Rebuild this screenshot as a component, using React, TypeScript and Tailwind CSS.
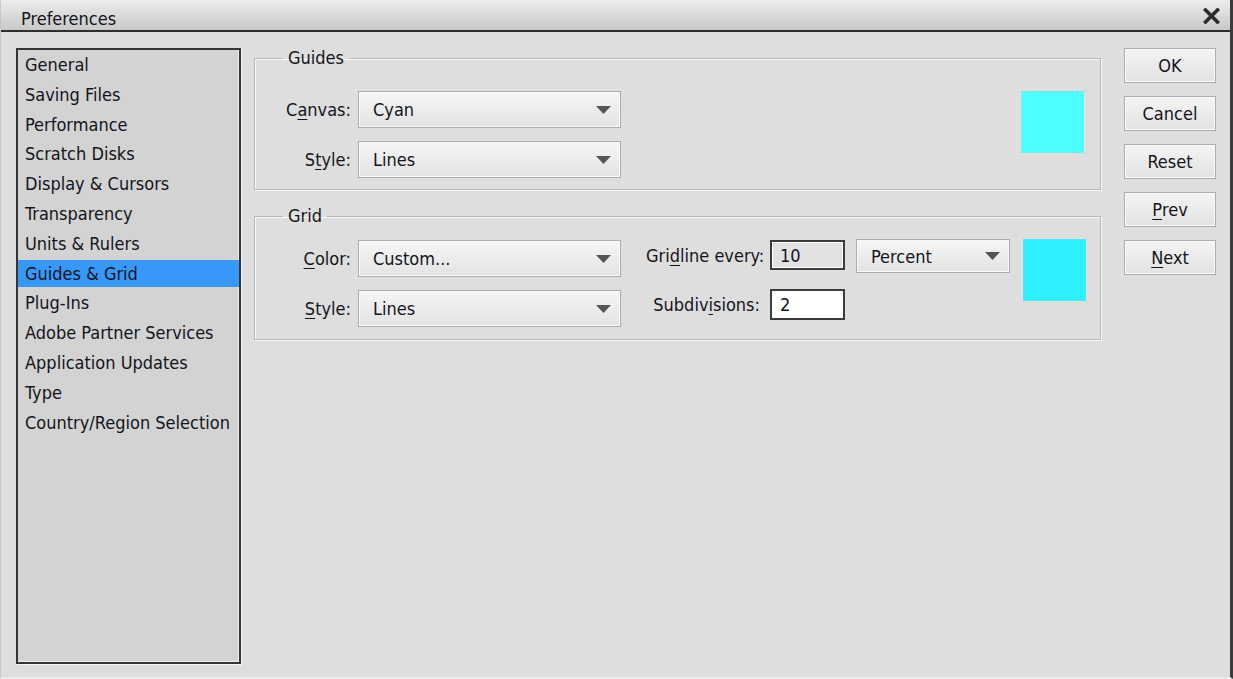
import { ReactNode } from "react";

const FONT = "font-['DejaVu_Sans_Condensed','DejaVu_Sans',sans-serif]";

const categories = [
  "General",
  "Saving Files",
  "Performance",
  "Scratch Disks",
  "Display & Cursors",
  "Transparency",
  "Units & Rulers",
  "Guides & Grid",
  "Plug-Ins",
  "Adobe Partner Services",
  "Application Updates",
  "Type",
  "Country/Region Selection",
];

// label with one underlined mnemonic letter
function Mn({ text, at }: { text: string; at: number }) {
  return (
    <>
      {text.slice(0, at)}
      <span className="underline underline-offset-[3px]">{text[at]}</span>
      {text.slice(at + 1)}
    </>
  );
}

function Dropdown({ value, w, h }: { value: string; w: string; h: string }) {
  return (
    <div
      className={`${w} ${h} flex items-center justify-between border border-[#acacac] bg-gradient-to-b from-[#f6f6f6] to-[#e3e3e3] pl-[14px] pr-[9px] shadow-[inset_0_0_0_1px_#fafafa]`}
    >
      <span>{value}</span>
      <svg width="15" height="8" viewBox="0 0 15 8">
        <path d="M0 0H15L7.5 8Z" fill="#555" />
      </svg>
    </div>
  );
}

function Group({ title, className, children }: { title: string; className: string; children: ReactNode }) {
  return (
    <fieldset
      className={`border border-[#b8b8b8] shadow-[inset_1px_1px_0_#f7f7f7,1px_1px_0_#f7f7f7] ${className}`}
    >
      <legend className="ml-[28px] px-[5px] leading-[20px]">{title}</legend>
      {children}
    </fieldset>
  );
}

function Button({ children }: { children: ReactNode }) {
  return (
    <div className="flex h-[35px] w-[92px] items-center justify-center border border-[#acacac] bg-gradient-to-b from-[#f4f4f4] to-[#e2e2e2] shadow-[inset_0_0_0_1px_#fbfbfb]">
      {children}
    </div>
  );
}

export default function App() {
  return (
    <div className={`${FONT} h-[679px] w-[1233px] overflow-hidden bg-[#dedede] text-[18px] text-[#14141c]`}>
      <div className="flex h-full flex-col border-r-[3px] border-l border-b-2 border-r-[#3c3c3c] border-l-[#c8c8c8] border-b-[#ececec]">
        {/* title bar */}
        <div className="flex h-[32px] shrink-0 items-center justify-between border-b-2 border-[#2e2e2e] bg-gradient-to-b from-[#ececec] to-[#c9c9c9] pl-[20px] pr-[10px] pt-[6px]">
          <span className="text-[18px]">Preferences</span>
          <svg width="17" height="16" viewBox="0 0 17 16" className="-mt-[4px]">
            <path d="M2.5 2L14.5 14M14.5 2L2.5 14" stroke="#2b2b2b" strokeWidth="3.6" strokeLinecap="square" />
          </svg>
        </div>

        <div className="flex pl-[15px] pt-[16px]">
          {/* category list */}
          <div className="h-[616px] w-[225px] border-2 border-[#353535] bg-[#d3d3d3] shadow-[1px_1px_0_#f4f4f4,inset_-1px_-1px_0_#f0f0f0]">
            <ul className="flex flex-col gap-[2.8px] pt-[1px]">
              {categories.map((c) => (
                <li
                  key={c}
                  className={`h-[27px] whitespace-nowrap pl-[7px] leading-[27px] ${c === "Guides & Grid" ? "bg-[#3797fb]" : ""}`}
                >
                  {c}
                </li>
              ))}
            </ul>
          </div>

          {/* settings */}
          <div className="ml-[13px] flex w-[847px] flex-col gap-[16px]">
            <Group title="Guides" className="h-[142px]">
              <div className="flex items-start justify-between pr-[15px] pt-[23px]">
                <div className="grid grid-cols-[96px_263px] items-center gap-x-[7px] gap-y-[13px]">
                  <span className="text-right"><Mn text="Canvas:" at={1} /></span>
                  <Dropdown value="Cyan" w="w-[263px]" h="h-[37px]" />
                  <span className="text-right"><Mn text="Style:" at={1} /></span>
                  <Dropdown value="Lines" w="w-[263px]" h="h-[37px]" />
                </div>
                <div className="-mt-[1px] h-[64px] w-[65px] border border-[#ffd6d6] bg-[#4dffff]" />
              </div>
            </Group>

            <Group title="Grid" className="h-[134px]">
              <div className="flex items-start pt-[14px]">
                <div className="grid grid-cols-[96px_263px] items-center gap-x-[7px] gap-y-[13px]">
                  <span className="text-right"><Mn text="Color:" at={0} /></span>
                  <Dropdown value="Custom..." w="w-[263px]" h="h-[37px]" />
                  <span className="text-right"><Mn text="Style:" at={0} /></span>
                  <Dropdown value="Lines" w="w-[263px]" h="h-[37px]" />
                </div>

                <div className="ml-[25px] grid grid-cols-[114px_75px] items-center gap-x-[10px] gap-y-[19px]">
                  <span className="text-right whitespace-nowrap"><Mn text="Gridline every:" at={3} /></span>
                  <div className="flex h-[30px] items-center border-2 border-[#3c3c3c] bg-[#e2e2e2] pl-[8px] shadow-[inset_0_0_0_1px_#fff]">
                    10
                  </div>
                  <span className="text-right whitespace-nowrap"><Mn text="Subdivisions:" at={6} /></span>
                  <div className="flex h-[31px] items-center border-2 border-[#3c3c3c] bg-white pl-[8px]">
                    2
                  </div>
                </div>

                <div className="ml-[11px] -mt-[1px]">
                  <Dropdown value="Percent" w="w-[154px]" h="h-[34px]" />
                </div>

                <div className="ml-[12px] -mt-[2px] h-[64px] w-[65px] border border-[#ffd6d6] bg-[#2ff0ff]" />
              </div>
            </Group>
          </div>

          {/* buttons */}
          <div className="ml-[23px] flex flex-col gap-[13px]">
            <Button>OK</Button>
            <Button>Cancel</Button>
            <Button>Reset</Button>
            <Button><Mn text="Prev" at={0} /></Button>
            <Button><Mn text="Next" at={0} /></Button>
          </div>
        </div>
      </div>
    </div>
  );
}
